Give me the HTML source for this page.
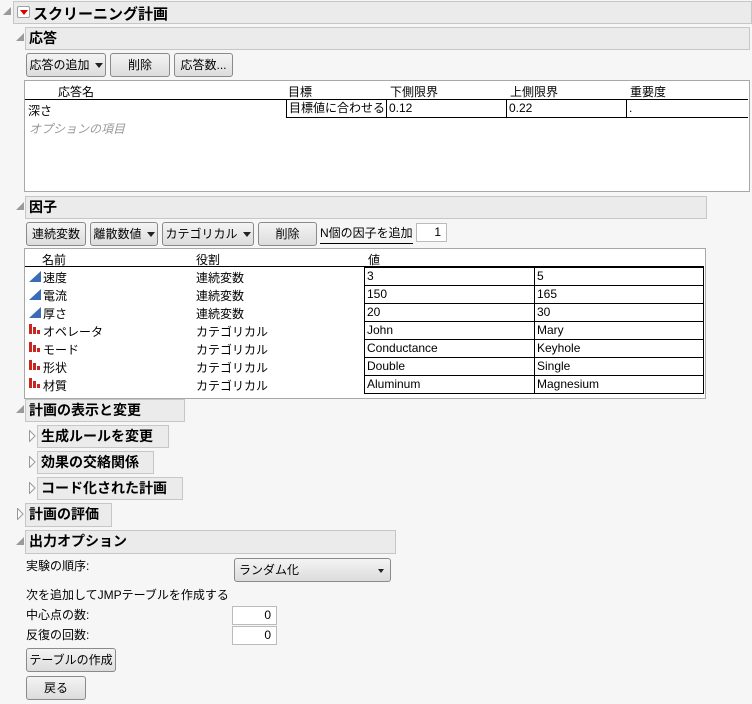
<!DOCTYPE html>
<html><head><meta charset="utf-8"><style>
*{margin:0;padding:0;box-sizing:border-box}
body{width:752px;height:704px;background:#f6f6f6;position:relative;overflow:hidden;font-family:"Liberation Sans","Noto Sans CJK JP",sans-serif;font-size:12px;color:#000}
.a{position:absolute;white-space:nowrap}
.bar{position:absolute;background:#ebebeb;border:1px solid #c6c6c6;font-weight:bold;font-size:14px;padding-left:3px;line-height:20px}
.btn{position:absolute;border:1px solid #8a8a8a;border-radius:3px;background:linear-gradient(#f4f4f4,#dcdcdc);text-align:center;line-height:22px;font-size:12px}
.tri{position:absolute;width:0;height:0}
.open{border-left:8px solid transparent;border-bottom:8px solid #9a9a9a}
.cl{position:absolute;width:7px;height:12px}
.box{position:absolute;background:#fff;border:1px solid #a8a8a8}
.cell{position:absolute;border:1px solid #000;background:#fff;line-height:17px;padding-left:2px;height:19px}
.dd{display:inline-block;border-left:4px solid transparent;border-right:4px solid transparent;border-top:5px solid #222;vertical-align:middle;margin-left:5px}
.ic1{position:absolute;width:0;height:0;border-left:12px solid transparent;border-bottom:11px solid #3a6db5}
</style></head><body>
<div class="tri open" style="left:3px;top:7px"></div>
<div class="bar" style="left:13px;top:1px;width:739px;height:23px;padding-left:0"></div>
<div class="a" style="left:17px;top:6px;width:13px;height:12px;border:1px solid #a0a0a0;border-radius:2px;background:#fff"><div style="position:absolute;left:2px;top:3px;border-left:4px solid transparent;border-right:4px solid transparent;border-top:5px solid #d00"></div></div>
<div class="a" style="left:33px;top:3px;font-weight:bold;font-size:15px">スクリーニング計画</div>

<div class="tri open" style="left:16px;top:33px"></div>
<div class="bar" style="left:25px;top:27px;width:725px;height:23px">応答</div>
<div class="btn" style="left:26px;top:53px;width:80px;height:24px">応答の追加<span class="dd"></span></div>
<div class="btn" style="left:110px;top:53px;width:60px;height:24px">削除</div>
<div class="btn" style="left:174px;top:53px;width:59px;height:24px">応答数...</div>
<div class="box" style="left:24px;top:80px;width:726px;height:112px"></div>
<div class="a" style="left:58px;top:83px">応答名</div>
<div class="a" style="left:288px;top:83px">目標</div>
<div class="a" style="left:390px;top:83px">下側限界</div>
<div class="a" style="left:510px;top:83px">上側限界</div>
<div class="a" style="left:630px;top:83px">重要度</div>
<div class="a" style="left:25px;top:99px;width:723px;height:1px;background:#000"></div>
<div class="a" style="left:28px;top:102px">深さ</div>
<div class="cell" style="left:286px;top:99px;width:101px">目標値に合わせる</div>
<div class="cell" style="left:386px;top:99px;width:121px">0.12</div>
<div class="cell" style="left:506px;top:99px;width:121px">0.22</div>
<div class="cell" style="left:626px;top:99px;width:122px;border-right:none">.</div>
<div class="a" style="left:29px;top:120px;color:#999;font-style:italic">オプションの項目</div>

<div class="tri open" style="left:16px;top:202px"></div>
<div class="bar" style="left:25px;top:196px;width:682px;height:23px">因子</div>
<div class="btn" style="left:26px;top:222px;width:60px;height:24px">連続変数</div>
<div class="btn" style="left:90px;top:222px;width:68px;height:24px">離散数値<span class="dd"></span></div>
<div class="btn" style="left:162px;top:222px;width:92px;height:24px">カテゴリカル<span class="dd"></span></div>
<div class="btn" style="left:258px;top:222px;width:59px;height:24px">削除</div>
<div class="a" style="left:320px;top:224px;border-bottom:1px solid #000;padding-bottom:2px">N個の因子を追加</div>
<div class="a" style="left:416px;top:223px;width:31px;height:19px;background:#fff;border:1px solid #bbb;text-align:right;padding-right:5px;line-height:17px">1</div>
<div class="box" style="left:24px;top:248px;width:682px;height:151px"></div>
<div class="a" style="left:42px;top:251px">名前</div>
<div class="a" style="left:196px;top:251px">役割</div>
<div class="a" style="left:368px;top:251px">値</div>
<div class="a" style="left:25px;top:266px;width:679px;height:1px;background:#000"></div>

<div class="ic1" style="left:29px;top:271px"></div><div class="a" style="left:43px;top:269px">速度</div><div class="a" style="left:196px;top:269px">連続変数</div>
<div class="ic1" style="left:29px;top:289px"></div><div class="a" style="left:43px;top:287px">電流</div><div class="a" style="left:196px;top:287px">連続変数</div>
<div class="ic1" style="left:29px;top:307px"></div><div class="a" style="left:43px;top:305px">厚さ</div><div class="a" style="left:196px;top:305px">連続変数</div>
<svg class="a" style="left:28px;top:322px" width="13" height="12"><path d="M1 2h3v10H1zM5 5h3v7H5zM9 8h3v4H9z" fill="#c8261e"/></svg><div class="a" style="left:43px;top:323px">オペレータ</div><div class="a" style="left:196px;top:323px">カテゴリカル</div>
<svg class="a" style="left:28px;top:340px" width="13" height="12"><path d="M1 2h3v10H1zM5 5h3v7H5zM9 8h3v4H9z" fill="#c8261e"/></svg><div class="a" style="left:43px;top:341px">モード</div><div class="a" style="left:196px;top:341px">カテゴリカル</div>
<svg class="a" style="left:28px;top:358px" width="13" height="12"><path d="M1 2h3v10H1zM5 5h3v7H5zM9 8h3v4H9z" fill="#c8261e"/></svg><div class="a" style="left:43px;top:359px">形状</div><div class="a" style="left:196px;top:359px">カテゴリカル</div>
<svg class="a" style="left:28px;top:376px" width="13" height="12"><path d="M1 2h3v10H1zM5 5h3v7H5zM9 8h3v4H9z" fill="#c8261e"/></svg><div class="a" style="left:43px;top:377px">材質</div><div class="a" style="left:196px;top:377px">カテゴリカル</div>

<div class="cell" style="left:364px;top:267px;width:171px">3</div><div class="cell" style="left:534px;top:267px;width:170px">5</div>
<div class="cell" style="left:364px;top:285px;width:171px">150</div><div class="cell" style="left:534px;top:285px;width:170px">165</div>
<div class="cell" style="left:364px;top:303px;width:171px">20</div><div class="cell" style="left:534px;top:303px;width:170px">30</div>
<div class="cell" style="left:364px;top:321px;width:171px">John</div><div class="cell" style="left:534px;top:321px;width:170px">Mary</div>
<div class="cell" style="left:364px;top:339px;width:171px">Conductance</div><div class="cell" style="left:534px;top:339px;width:170px">Keyhole</div>
<div class="cell" style="left:364px;top:357px;width:171px">Double</div><div class="cell" style="left:534px;top:357px;width:170px">Single</div>
<div class="cell" style="left:364px;top:375px;width:171px">Aluminum</div><div class="cell" style="left:534px;top:375px;width:170px">Magnesium</div>

<div class="tri open" style="left:16px;top:405px"></div>
<div class="bar" style="left:25px;top:399px;width:160px;height:23px">計画の表示と変更</div>
<svg class="cl" style="left:29px;top:430px"><path d="M0.5 0.5L6 6 0.5 11.5z" fill="#fff" stroke="#999"/></svg>
<div class="bar" style="left:37px;top:425px;width:132px;height:23px">生成ルールを変更</div>
<svg class="cl" style="left:29px;top:456px"><path d="M0.5 0.5L6 6 0.5 11.5z" fill="#fff" stroke="#999"/></svg>
<div class="bar" style="left:37px;top:451px;width:117px;height:23px">効果の交絡関係</div>
<svg class="cl" style="left:29px;top:482px"><path d="M0.5 0.5L6 6 0.5 11.5z" fill="#fff" stroke="#999"/></svg>
<div class="bar" style="left:37px;top:477px;width:146px;height:23px">コード化された計画</div>
<svg class="cl" style="left:17px;top:508px"><path d="M0.5 0.5L6 6 0.5 11.5z" fill="#fff" stroke="#999"/></svg>
<div class="bar" style="left:25px;top:503px;width:87px;height:24px">計画の評価</div>
<div class="tri open" style="left:16px;top:537px"></div>
<div class="bar" style="left:25px;top:530px;width:371px;height:24px">出力オプション</div>

<div class="a" style="left:26px;top:557px">実験の順序:</div>
<div class="btn" style="left:234px;top:558px;width:157px;height:24px;text-align:left;padding-left:4px">ランダム化<span class="dd" style="position:absolute;right:6px;top:10px;border-left-width:3px;border-right-width:3px;border-top-width:4px"></span></div>
<div class="a" style="left:26px;top:586px">次を追加してJMPテーブルを作成する</div>
<div class="a" style="left:26px;top:606px">中心点の数:</div>
<div class="a" style="left:232px;top:606px;width:45px;height:19px;background:#fff;border:1px solid #bbb;text-align:right;padding-right:5px;line-height:17px">0</div>
<div class="a" style="left:26px;top:626px">反復の回数:</div>
<div class="a" style="left:232px;top:626px;width:45px;height:19px;background:#fff;border:1px solid #bbb;text-align:right;padding-right:5px;line-height:17px">0</div>
<div class="btn" style="left:26px;top:648px;width:90px;height:24px">テーブルの作成</div>
<div class="btn" style="left:26px;top:676px;width:60px;height:24px">戻る</div>
</body></html>
